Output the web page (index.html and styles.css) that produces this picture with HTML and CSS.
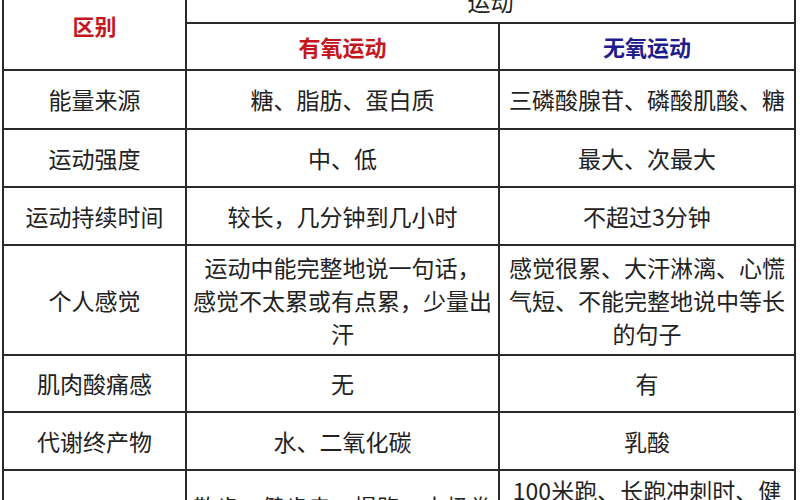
FILE: index.html
```html
<!DOCTYPE html>
<html lang="zh-CN">
<head>
<meta charset="utf-8">
<title>有氧运动与无氧运动的区别</title>
<link rel="stylesheet" href="styles.css">
</head>
<body>
<table class="sheet">
  <colgroup>
    <col class="c1">
    <col class="c2">
    <col class="c3">
  </colgroup>
  <tbody>
    <tr class="r-top">
      <td rowspan="2" class="head red">区别</td>
      <td colspan="2">运动</td>
    </tr>
    <tr class="r-sub">
      <td class="head red">有氧运动</td>
      <td class="head blue">无氧运动</td>
    </tr>
    <tr class="r-a">
      <td>能量来源</td>
      <td>糖、脂肪、蛋白质</td>
      <td>三磷酸腺苷、磷酸肌酸、糖</td>
    </tr>
    <tr class="r-b">
      <td>运动强度</td>
      <td>中、低</td>
      <td>最大、次最大</td>
    </tr>
    <tr class="r-b">
      <td>运动持续时间</td>
      <td>较长，几分钟到几小时</td>
      <td>不超过3分钟</td>
    </tr>
    <tr class="r-tall">
      <td>个人感觉</td>
      <td>运动中能完整地说一句话，<br>感觉不太累或有点累，少量出<br>汗</td>
      <td>感觉很累、大汗淋漓、心慌<br>气短、不能完整地说中等长<br>的句子</td>
    </tr>
    <tr class="r-c">
      <td>肌肉酸痛感</td>
      <td>无</td>
      <td>有</td>
    </tr>
    <tr class="r-b">
      <td>代谢终产物</td>
      <td>水、二氧化碳</td>
      <td>乳酸</td>
    </tr>
    <tr class="r-last">
      <td>运动项目</td>
      <td>散步、健步走、慢跑、太极拳<br>、骑自行车等</td>
      <td>100米跑、长跑冲刺时、健<br>身房器械练习、举重、<br>俯卧撑等</td>
    </tr>
  </tbody>
</table>
</body>
</html>
```

FILE: styles.css
```css
html, body {
  margin: 0;
  padding: 0;
  background: #ffffff;
}

body {
  font-family: "Noto Sans CJK SC", "Microsoft YaHei", sans-serif;
  color: #222222;
  overflow: hidden;
}

.sheet {
  border-collapse: collapse;
  table-layout: fixed;
  width: 794px;
  margin: -21px 0 0 2px;
}

.c1 { width: 183px; }
.c2 { width: 313px; }
.c3 { width: 296px; }

.sheet td {
  border: 2px solid #2a2a2a;
  text-align: center;
  vertical-align: middle;
  font-size: 23px;
  line-height: 33px;
  padding: 0 4px;
  box-sizing: border-box;
}

.sheet .head {
  font-size: 22px;
  font-weight: 700;
}

.red { color: #c4161e; }
.blue { color: #1f1c8c; }

.r-top td { height: 43px; }
.r-sub td { height: 47px; }
.r-a td { height: 59px; }
.r-b td { height: 58px; }
.r-tall td { height: 110px; }
.r-c td { height: 57px; }
.r-last td { height: 106px; }
```
